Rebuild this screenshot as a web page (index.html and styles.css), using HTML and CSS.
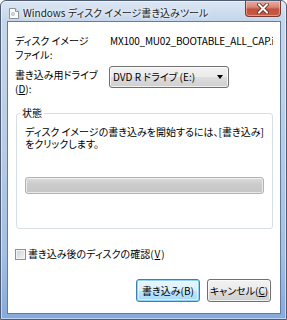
FILE: index.html
```html
<!DOCTYPE html>
<html lang="ja">
<head>
    <meta charset="UTF-8">
    <title>Windows ディスク イメージ書き込みツール</title>
    <link rel="stylesheet" href="styles.css">
</head>
<body>
    <div class="window">
        <div class="titlebar">
            <svg class="app-icon" width="10" height="11" viewBox="0 0 10 11">
                <path d="M0.5 0.5 H6.5 L9.5 3.5 V10.5 H0.5 Z" fill="#fdfdfd" stroke="#8a949e"/>
                <path d="M6.5 0.5 V3.5 H9.5" fill="#e4e8ec" stroke="#8a949e"/>
                <circle cx="4" cy="6" r="2" fill="#b9bec4"/>
                <circle cx="4" cy="6" r="0.7" fill="#fff"/>
            </svg>
            <span class="title">Windows ディスク イメージ書き込みツール</span>
            <button class="close" type="button">
                <svg width="12" height="11" viewBox="0 0 12 11">
                    <path d="M2 1.5 L10 9.5 M10 1.5 L2 9.5" stroke="#5a2118" stroke-width="3.6" stroke-linecap="square"/>
                    <path d="M2 1.5 L10 9.5 M10 1.5 L2 9.5" stroke="#fff" stroke-width="2" stroke-linecap="square"/>
                </svg>
            </button>
        </div>

        <form class="client">
            <div class="field">
                <div class="field-label">ディスク イメージ<br>ファイル:</div>
                <div class="field-value">MX100_MU02_BOOTABLE_ALL_CAP.iso</div>
            </div>

            <div class="field drive">
                <label class="field-label" for="drive">書き込み用ドライブ<br>(<u>D</u>):</label>
                <div class="select" id="drive">
                    <span>DVD R ドライブ (E:)</span>
                    <span class="arrow"></span>
                </div>
            </div>

            <fieldset class="status">
                <legend>状態</legend>
                <p class="status-text">ディスク イメージの書き込みを開始するには、[書き込み]</p>
                <p class="status-text">をクリックします。</p>
                <div class="progress"></div>
            </fieldset>

            <label class="verify"><span class="checkbox"></span>書き込み後のディスクの確認(<u>V</u>)</label>

            <div class="buttons">
                <button type="button" class="btn btn-default">書き込み(B)</button>
                <button type="button" class="btn">キャンセル(<u>C</u>)</button>
            </div>
        </form>
    </div>
</body>
</html>
```

FILE: styles.css
```css
* {
    box-sizing: border-box;
}

html, body {
    margin: 0;
}

body {
    width: 287px;
    height: 320px;
    overflow: hidden;
    font-family: "Noto Sans CJK JP", "Liberation Sans", sans-serif;
    font-size: 10px;
    font-feature-settings: "palt";
    color: #000;
}

.window {
    display: flex;
    flex-direction: column;
    width: 287px;
    height: 320px;
    padding: 0 5px 5px 6px;
    border: 1px solid #4e5d74;
    border-radius: 6px 6px 0 0;
    background: linear-gradient(#dbe6f3 0, #c6d7ec 18px, #b7cce7 45%, #a2bfe4 80%, #86aadd 100%);
    box-shadow: inset 0 0 0 1px rgba(255, 255, 255, 0.5);
}

.titlebar {
    display: flex;
    align-items: flex-start;
    height: 20px;
    flex: none;
}

.app-icon {
    margin: 7px 0 0 2px;
}

.title {
    margin: 5px 0 0 4px;
    line-height: 14px;
    color: #1b1b1b;
    text-shadow: 0 0 6px #fff, 0 0 3px #fff;
    white-space: nowrap;
}

.close {
    margin: 0 0 0 auto;
    width: 36px;
    height: 16px;
    padding: 0;
    display: flex;
    align-items: center;
    justify-content: center;
    border: 1px solid #7a3a34;
    border-top: none;
    border-radius: 0 0 4px 4px;
    background: linear-gradient(#e6ada3 0, #d88877 40%, #c3513f 55%, #c85c46 100%);
    box-shadow: inset 0 0 0 1px rgba(255, 220, 210, 0.45);
}

.client {
    flex: 1;
    display: flex;
    flex-direction: column;
    min-width: 0;
    margin: 0;
    padding: 12px 7px 0 7px;
    background: #fff;
    border: 1px solid #667b98;
}

.field {
    display: flex;
    align-items: flex-start;
    line-height: 14px;
}

.field-label {
    width: 94px;
    flex: none;
}

.field-value {
    padding-left: 1px;
    letter-spacing: -0.2px;
    white-space: nowrap;
    overflow: hidden;
}

.drive {
    margin-top: 4px;
}

.drive .field-label {
    margin-top: 2px;
}

.select {
    display: flex;
    align-items: center;
    justify-content: space-between;
    width: 120px;
    height: 22px;
    padding: 0 5px 0 3px;
    border: 1px solid #707070;
    border-radius: 3px;
    background: linear-gradient(#f2f2f2 0, #ebebeb 50%, #dddddd 51%, #cfcfcf 100%);
    box-shadow: inset 0 0 0 1px rgba(255, 255, 255, 0.7);
}

.arrow {
    width: 0;
    height: 0;
    border-left: 3.5px solid transparent;
    border-right: 3.5px solid transparent;
    border-top: 4px solid #000;
}

.status {
    min-width: 0;
    margin: 10px 0 0 1px;
    padding: 6px 8px 34px 8px;
    border: 1px solid #d5dfe5;
    border-radius: 3px;
    box-shadow: inset 0 0 0 1px #fff;
}

.status legend {
    margin-left: -5px;
    padding: 0 2px;
    line-height: 14px;
}

.status-text {
    margin: 0;
    height: 12px;
    line-height: 12px;
    white-space: nowrap;
}

.progress {
    height: 17px;
    margin: 27px 0 0 0;
    border: 1px solid #b2b2b2;
    border-radius: 3px;
    background: linear-gradient(#dcdcdc 0, #cccccc 40%, #c6c6c6 100%);
    box-shadow: inset 0 0 0 1px rgba(255, 255, 255, 0.6);
}

.verify {
    display: flex;
    align-items: center;
    gap: 1px;
    margin-top: 18px;
    line-height: 14px;
}

.checkbox {
    width: 11px;
    height: 11px;
    margin-right: 1px;
    border: 1px solid #8e8f8f;
    background: linear-gradient(135deg, #cbcfd5 0, #f6f6f6 100%);
    box-shadow: inset 0 0 0 1px #f4f4f4;
}

.buttons {
    display: flex;
    justify-content: flex-end;
    gap: 7px;
    margin: 18px 2px 0 0;
}

.btn {
    width: 64px;
    height: 23px;
    padding: 0;
    font: inherit;
    font-feature-settings: "palt";
    border: 1px solid #707070;
    border-radius: 3px;
    background: linear-gradient(#f2f2f2 0, #ebebeb 50%, #dddddd 51%, #cfcfcf 100%);
    box-shadow: inset 0 0 0 1px rgba(255, 255, 255, 0.7);
}

.btn-default {
    border-color: #3c7fb1;
    background: linear-gradient(#eaf6fd 0, #d9f0fc 50%, #bee6fd 51%, #a7d9f5 100%);
    box-shadow: inset 0 0 0 1px #8fd4f8, inset 0 0 0 2px rgba(255, 255, 255, 0.5);
}
```
